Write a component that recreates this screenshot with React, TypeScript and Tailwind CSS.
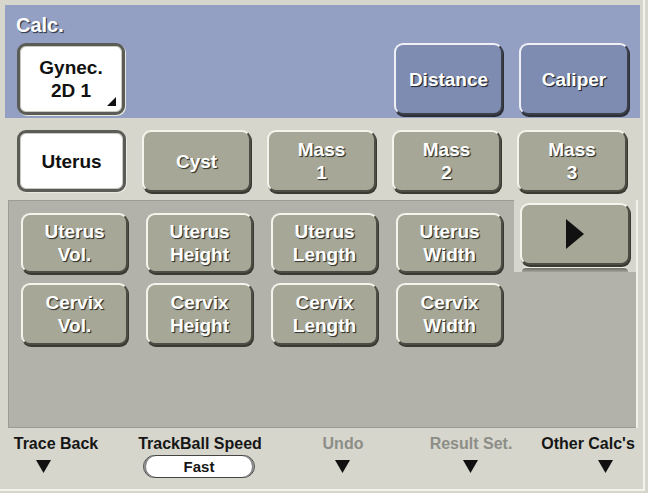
import React from "react";

type Tone = "white" | "blue" | "olive";

const toneClass: Record<Tone, string> = {
  white:
    "bg-white text-[#111] border-[3px] border-[#5b5c55] shadow-[inset_0_0_0_1px_#c9c9c2,1px_1px_0_#e8e8e0]",
  blue:
    "bg-[#7e8cb2] text-white border-2 border-t-[#eef0f6] border-l-[#eef0f6] border-b-[#3b3f4a] border-r-[#3b3f4a] shadow-[1px_2px_0_#2c2f36] [text-shadow:1px_1px_0_#2a2e38,1px_1px_1px_#2a2e38]",
  olive:
    "bg-[#a7a797] text-white border-2 border-t-[#f4f4ec] border-l-[#f4f4ec] border-b-[#4d4d45] border-r-[#4d4d45] shadow-[1px_2px_0_#3a3a33] [text-shadow:1px_1px_0_#3c3c35,1px_1px_1px_#3c3c35]",
};

function Key({
  tone,
  lines,
  className = "",
  children,
}: {
  tone: Tone;
  lines?: string[];
  className?: string;
  children?: React.ReactNode;
}) {
  return (
    <div
      className={`relative flex flex-col items-center justify-center rounded-[9px] text-[19px] font-bold leading-[23px] ${toneClass[tone]} ${className}`}
    >
      {lines?.map((l) => (
        <span key={l}>{l}</span>
      ))}
      {children}
    </div>
  );
}

function DownArrow({ className = "" }: { className?: string }) {
  return (
    <svg width="15" height="13" viewBox="0 0 15 13" className={className}>
      <polygon points="0,0 15,0 7.5,13" fill="#111" />
    </svg>
  );
}

export default function App() {
  return (
    <div className="w-[648px] h-[493px] bg-[#d6d6cd] font-['Liberation_Sans',Arial,sans-serif] overflow-hidden">
      <div className="w-[645px] h-[491px] border-r-2 border-b-2 border-[#f3f3ec] pt-[5px] flex flex-col">
        {/* top mode panel */}
        <div className="ml-[5px] w-[635px] h-[113px] bg-[#93a0c3] px-[12px] pt-[10px]">
          <div className="ml-[-1px] text-[20px] leading-[20px] font-bold text-white [text-shadow:1px_1px_0_#3a3f52,1px_1px_1px_#3a3f52]">
            Calc.
          </div>
          <div className="mt-[8px] flex">
            <Key tone="white" className="w-[108px] h-[72px]" lines={["Gynec.", "2D 1"]}>
              <svg width="9" height="9" viewBox="0 0 9 9" className="absolute right-[6px] bottom-[6px]">
                <polygon points="9,0 9,9 0,9" fill="#111" />
              </svg>
            </Key>
            <div className="flex-1" />
            <Key tone="blue" className="w-[109px] h-[72px]" lines={["Distance"]} />
            <Key tone="blue" className="ml-[16px] mr-[-1px] w-[110px] h-[72px]" lines={["Caliper"]} />
          </div>
        </div>

        {/* organ / target row */}
        <div className="h-[82px] pt-[12px] pl-[17px] flex gap-[16px]">
          <Key tone="white" className="w-[109px] h-[62px]" lines={["Uterus"]} />
          <Key tone="olive" className="w-[109px] h-[62px]" lines={["Cyst"]} />
          <Key tone="olive" className="w-[109px] h-[62px]" lines={["Mass", "1"]} />
          <Key tone="olive" className="w-[109px] h-[62px]" lines={["Mass", "2"]} />
          <Key tone="olive" className="w-[110px] h-[62px]" lines={["Mass", "3"]} />
        </div>

        {/* measurement area */}
        <div className="ml-[8px] w-[630px] h-[228px] flex flex-col border-r-2 border-[#f1f1ea]">
          <div className="h-[72px] flex">
            <div className="w-[506px] bg-[#b2b2ab] pt-[12px] pl-[12px] flex gap-[18px] border-l border-t border-[#9c9c95]">
              <Key tone="olive" className="w-[107px] h-[60px]" lines={["Uterus", "Vol."]} />
              <Key tone="olive" className="w-[107px] h-[60px]" lines={["Uterus", "Height"]} />
              <Key tone="olive" className="w-[107px] h-[60px]" lines={["Uterus", "Length"]} />
              <Key tone="olive" className="w-[107px] h-[60px]" lines={["Uterus", "Width"]} />
            </div>
            <div className="flex-1 flex flex-col items-center pt-[3px]">
              <Key tone="olive" className="w-[110px] h-[62px]">
                <svg width="18" height="30" viewBox="0 0 18 30">
                  <polygon points="0,0 18,15 0,30" fill="#111" />
                </svg>
              </Key>
              <div className="mt-[2px] w-[106px] h-[5px] rounded-t-[4px] border-t border-[#eeeee6] bg-gradient-to-b from-[#6f6f68] to-[#a3a39c]" />
            </div>
          </div>
          <div className="flex-1 bg-[#b2b2ab] pt-[11px] pl-[12px] flex items-start gap-[18px] border-l border-b border-[#9c9c95]">
            <Key tone="olive" className="w-[107px] h-[62px]" lines={["Cervix", "Vol."]} />
            <Key tone="olive" className="w-[107px] h-[62px]" lines={["Cervix", "Height"]} />
            <Key tone="olive" className="w-[107px] h-[62px]" lines={["Cervix", "Length"]} />
            <Key tone="olive" className="w-[107px] h-[62px]" lines={["Cervix", "Width"]} />
          </div>
        </div>

        {/* soft-key legend */}
        <div className="flex-1 flex pt-[7px] text-[16px] leading-[18px] font-bold text-[#161616]">
          <div className="w-[102px] ml-[5px] flex flex-col items-center">
            <span>Trace Back</span>
            <DownArrow className="mt-[7px] mr-[26px]" />
          </div>
          <div className="w-[140px] ml-[23px] flex flex-col items-center">
            <span>TrackBall Speed</span>
            <div className="mt-[2px] ml-[-2px] w-[112px] h-[23px] rounded-full bg-white border border-[#444] shadow-[inset_2px_0_0_#888,inset_-2px_0_0_#888] flex items-center justify-center text-[15px] font-bold">
              Fast
            </div>
          </div>
          <div className="w-[86px] ml-[30px] flex flex-col items-center">
            <span className="text-[#8d8d88]">Undo</span>
            <DownArrow className="mt-[7px] mr-[2px]" />
          </div>
          <div className="w-[102px] ml-[34px] flex flex-col items-center">
            <span className="text-[#8d8d88]">Result Set.</span>
            <DownArrow className="mt-[7px] mr-[2px]" />
          </div>
          <div className="w-[110px] ml-[11px] flex flex-col items-center">
            <span>Other Calc's</span>
            <DownArrow className="mt-[7px] ml-[34px]" />
          </div>
        </div>
      </div>
    </div>
  );
}
